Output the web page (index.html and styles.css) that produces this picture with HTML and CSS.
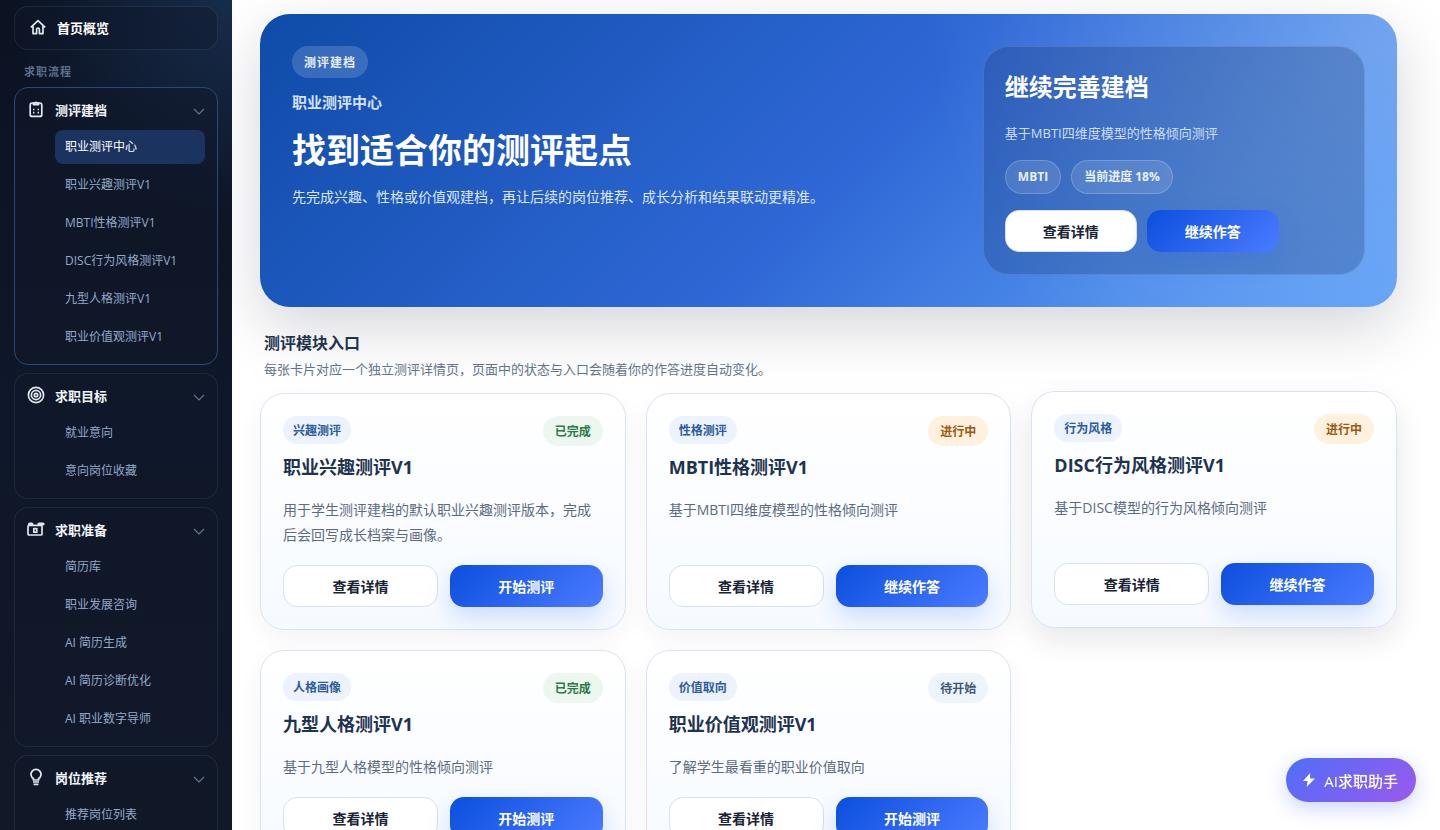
FILE: index.html
```html
<!DOCTYPE html>
<html lang="zh-CN">
<head>
  <meta charset="UTF-8">
  <meta name="viewport" content="width=device-width, initial-scale=1.0">
  <title>职业测评中心</title>
  <link rel="stylesheet" href="styles.css">
</head>
<body>
  <div class="layout">
    <aside class="sidebar">
      <a class="nav-home" href="#">
        <svg class="nav-icon" viewBox="0 0 18 18"><path d="M1.8 9.4 9 2.6l7.2 6.8M4 7.6v8h3.6v-4.2a1.4 1.4 0 0 1 2.8 0v4.2H14v-8"/></svg>
        首页概览
      </a>
      <div class="nav-label">求职流程</div>

      <nav class="nav-groups">
        <section class="nav-group active">
          <button class="nav-title" type="button">
            <svg class="nav-icon" viewBox="0 0 18 18"><rect x="3.2" y="3" width="11.6" height="13.4" rx="2"/><path d="M6.4 4.6V3.2h1.2a1.5 1.5 0 0 1 2.8 0h1.2v1.4z"/><path d="M6 9.5h1.4M10.6 9.5H12M6 12.6h1.4M10.6 12.6H12"/></svg>
            <span>测评建档</span>
            <svg class="chevron" viewBox="0 0 12 12"><path d="m1 6 5 5 5-5"/></svg>
          </button>
          <div class="nav-items">
            <a class="current" href="#">职业测评中心</a>
            <a href="#">职业兴趣测评V1</a>
            <a href="#">MBTI性格测评V1</a>
            <a href="#">DISC行为风格测评V1</a>
            <a href="#">九型人格测评V1</a>
            <a href="#">职业价值观测评V1</a>
          </div>
        </section>

        <section class="nav-group">
          <button class="nav-title" type="button">
            <svg class="nav-icon" viewBox="0 0 18 18"><circle cx="9" cy="9" r="7.6"/><circle cx="9" cy="9" r="4.6"/><circle cx="9" cy="9" r="1.7"/></svg>
            <span>求职目标</span>
            <svg class="chevron" viewBox="0 0 12 12"><path d="m1 6 5 5 5-5"/></svg>
          </button>
          <div class="nav-items">
            <a href="#">就业意向</a>
            <a href="#">意向岗位收藏</a>
          </div>
        </section>

        <section class="nav-group">
          <button class="nav-title" type="button">
            <svg class="nav-icon" viewBox="0 0 18 18"><rect x="1" y="5.400" width="14" height="9.600" rx="1"/><path d="M2.600 4h2.200M12 4h4" stroke-width="3.200" stroke-linecap="round"/><path d="M6.800 8.600h3v3.600h-3z"/></svg>
            <span>求职准备</span>
            <svg class="chevron" viewBox="0 0 12 12"><path d="m1 6 5 5 5-5"/></svg>
          </button>
          <div class="nav-items">
            <a href="#">简历库</a>
            <a href="#">职业发展咨询</a>
            <a href="#">AI 简历生成</a>
            <a href="#">AI 简历诊断优化</a>
            <a href="#">AI 职业数字导师</a>
          </div>
        </section>

        <section class="nav-group">
          <button class="nav-title" type="button">
            <svg class="nav-icon" viewBox="0 0 18 18"><path d="M6.4 12V10.600A5 5 0 1 1 11.6 10.600V12zM6 14h6M6.600 16.400h4.800"/></svg>
            <span>岗位推荐</span>
            <svg class="chevron" viewBox="0 0 12 12"><path d="m1 6 5 5 5-5"/></svg>
          </button>
          <div class="nav-items">
            <a href="#">推荐岗位列表</a>
          </div>
        </section>
      </nav>
    </aside>

    <main class="main">
      <section class="hero">
        <div class="hero-copy">
          <span class="hero-badge">测评建档</span>
          <p class="hero-kicker">职业测评中心</p>
          <h1>找到适合你的测评起点</h1>
          <p class="hero-desc">先完成兴趣、性格或价值观建档，再让后续的岗位推荐、成长分析和结果联动更精准。</p>
        </div>
        <div class="hero-panel">
          <h2>继续完善建档</h2>
          <p>基于MBTI四维度模型的性格倾向测评</p>
          <div class="pills">
            <span class="pill">MBTI</span>
            <span class="pill">当前进度 18%</span>
          </div>
          <div class="hero-actions">
            <button class="btn btn-plain" type="button">查看详情</button>
            <button class="btn btn-primary" type="button">继续作答</button>
          </div>
        </div>
      </section>

      <header class="section-head">
        <h2>测评模块入口</h2>
        <p>每张卡片对应一个独立测评详情页，页面中的状态与入口会随着你的作答进度自动变化。</p>
      </header>

      <div class="cards">
        <article class="card">
          <div class="card-top"><span class="tag">兴趣测评</span><span class="state done">已完成</span></div>
          <h3>职业兴趣测评V1</h3>
          <p>用于学生测评建档的默认职业兴趣测评版本，完成后会回写成长档案与画像。</p>
          <div class="card-actions">
            <button class="btn btn-plain" type="button">查看详情</button>
            <button class="btn btn-primary" type="button">开始测评</button>
          </div>
        </article>

        <article class="card">
          <div class="card-top"><span class="tag">性格测评</span><span class="state doing">进行中</span></div>
          <h3>MBTI性格测评V1</h3>
          <p>基于MBTI四维度模型的性格倾向测评</p>
          <div class="card-actions">
            <button class="btn btn-plain" type="button">查看详情</button>
            <button class="btn btn-primary" type="button">继续作答</button>
          </div>
        </article>

        <article class="card raised">
          <div class="card-top"><span class="tag">行为风格</span><span class="state doing">进行中</span></div>
          <h3>DISC行为风格测评V1</h3>
          <p>基于DISC模型的行为风格倾向测评</p>
          <div class="card-actions">
            <button class="btn btn-plain" type="button">查看详情</button>
            <button class="btn btn-primary" type="button">继续作答</button>
          </div>
        </article>

        <article class="card">
          <div class="card-top"><span class="tag">人格画像</span><span class="state done">已完成</span></div>
          <h3>九型人格测评V1</h3>
          <p>基于九型人格模型的性格倾向测评</p>
          <div class="card-actions">
            <button class="btn btn-plain" type="button">查看详情</button>
            <button class="btn btn-primary" type="button">开始测评</button>
          </div>
        </article>

        <article class="card">
          <div class="card-top"><span class="tag">价值取向</span><span class="state todo">待开始</span></div>
          <h3>职业价值观测评V1</h3>
          <p>了解学生最看重的职业价值取向</p>
          <div class="card-actions">
            <button class="btn btn-plain" type="button">查看详情</button>
            <button class="btn btn-primary" type="button">开始测评</button>
          </div>
        </article>
      </div>
    </main>
  </div>

  <button class="assistant" type="button">
    <svg viewBox="0 0 14 14"><path d="M8.200 0 1 8h4.600L4.600 14 13 5.600H8z"/></svg>
    AI求职助手
  </button>
</body>
</html>
```
FILE: styles.css
```css
* {
  margin: 0;
  padding: 0;
  box-sizing: border-box;
}

body {
  height: 100vh;
  overflow: hidden;
  font-family: "Open Sans", "Noto Sans CJK SC", sans-serif;
  color: #1e293b;
  background: #fff;
}

a {
  text-decoration: none;
}

button {
  font-family: inherit;
  border: none;
  cursor: pointer;
}

.layout {
  display: flex;
  height: 100vh;
}

/* sidebar */
.sidebar {
  flex: 0 0 232px;
  padding: 6px 14px 0;
  overflow: hidden;
  background:
    radial-gradient(circle at 100% 0, rgba(56, 120, 190, 0.26), transparent 220px),
    linear-gradient(180deg, #0b1222 0%, #0f172a 50%, #111827 100%);
}

.nav-icon {
  flex: none;
  width: 18px;
  height: 18px;
  fill: none;
  stroke: #e2e8f0;
  stroke-width: 1.7;
  stroke-linejoin: round;
}

.nav-home {
  display: flex;
  align-items: center;
  gap: 10px;
  height: 44px;
  padding: 0 14px 2px;
  border: 1px solid rgba(148, 163, 184, 0.13);
  border-radius: 14px;
  background: rgba(15, 23, 42, 0.4);
  color: #fff;
  font-size: 13px;
  font-weight: 700;
}

.nav-label {
  padding: 12px 10px 6px;
  color: #5d6f8c;
  font-size: 11px;
  font-weight: 600;
  line-height: 19px;
  letter-spacing: 1px;
}

.nav-groups {
  display: flex;
  flex-direction: column;
  gap: 8px;
}

.nav-group {
  padding-bottom: 10px;
  border: 1px solid rgba(148, 163, 184, 0.13);
  border-radius: 14px;
  background: rgba(15, 23, 42, 0.5);
}

.nav-group.active {
  border-color: #264a7c;
}

.nav-title {
  display: flex;
  align-items: center;
  gap: 10px;
  width: 100%;
  height: 42px;
  padding: 0 12px;
  background: none;
  color: #f1f5f9;
  font-size: 13px;
  font-weight: 700;
  text-align: left;
}

.nav-title span {
  flex: 1;
}

.chevron {
  width: 12px;
  height: 12px;
  fill: none;
  stroke: #64748b;
  stroke-width: 1.2;
}

.nav-items {
  display: flex;
  flex-direction: column;
  gap: 4px;
  padding: 0 12px 0 40px;
}

.nav-items a {
  padding: 0 10px;
  border-radius: 8px;
  color: #94a9c9;
  font-size: 12px;
  line-height: 34px;
}

.nav-items .current {
  background: #1a335f;
  color: #fff;
}

/* main */
.main {
  flex: 1;
  min-width: 0;
  padding: 14px 43px 0 28px;
  overflow: hidden;
}

.hero {
  display: grid;
  grid-template-columns: 1.75fr 1fr;
  gap: 22px;
  padding: 32px;
  border-radius: 30px;
  background:
    radial-gradient(circle at 100% 0, rgba(255, 255, 255, 0.2), transparent 40%),
    linear-gradient(135deg, #0f4ba8 0%, #2f68d6 52%, #4f8eec 80%, #5c9ef7 100%);
  box-shadow: 0 20px 60px rgba(15, 23, 42, 0.18);
  color: #fff;
}

.hero-badge {
  display: inline-block;
  padding: 1px 12px 0;
  border-radius: 16px;
  background: rgba(255, 255, 255, 0.16);
  color: #e6eefc;
  font-size: 12px;
  font-weight: 700;
  line-height: 31px;
  letter-spacing: 1px;
}

.hero-kicker {
  margin-top: 12px;
  color: #d3e0f6;
  font-size: 15px;
  font-weight: 600;
  line-height: 24px;
}

.hero h1 {
  margin-top: 14px;
  font-size: 34px;
  font-weight: 700;
  line-height: 44px;
}

.hero-desc {
  margin-top: 12px;
  color: #dce7fa;
  font-size: 14px;
  line-height: 26px;
}

.hero-panel {
  padding: 22px 21px;
  border: 1px solid rgba(255, 255, 255, 0.13);
  border-radius: 26px;
  background: rgba(15, 42, 90, 0.24);
}

.hero-panel h2 {
  font-size: 24px;
  line-height: 36px;
}

.hero-panel p {
  margin-top: 16px;
  color: #cfdef5;
  font-size: 13px;
  line-height: 24px;
}

.pills {
  display: flex;
  gap: 10px;
  margin: 15px 0 16px;
}

.pill {
  padding: 0 12px;
  border: 1px solid rgba(255, 255, 255, 0.2);
  border-radius: 17px;
  background: rgba(255, 255, 255, 0.12);
  color: #e9f1fd;
  font-size: 12px;
  font-weight: 700;
  line-height: 32px;
}

.hero-actions {
  display: flex;
  gap: 10px;
}

.hero-actions .btn {
  min-width: 132px;
}

.btn {
  height: 42px;
  padding: 0 16px;
  border-radius: 14px;
  font-size: 14px;
  font-weight: 600;
}

.btn-plain {
  border: 1px solid #d8e1ee;
  background: #fff;
  color: #1b2434;
}

.btn-primary {
  background: linear-gradient(135deg, #0b4fde 0%, #4b7bff 100%);
  box-shadow: 0 10px 24px rgba(37, 99, 235, 0.2);
  color: #fff;
}

.section-head {
  padding: 24px 4px 12px;
}

.section-head h2 {
  color: #1f3350;
  font-size: 16px;
  font-weight: 600;
  line-height: 24px;
}

.section-head p {
  margin-top: 2px;
  color: #64748b;
  font-size: 13px;
  line-height: 24px;
}

.cards {
  display: grid;
  grid-template-columns: repeat(3, 1fr);
  gap: 20px;
}

.card {
  display: flex;
  flex-direction: column;
  padding: 22px;
  border: 1px solid #d9e4f2;
  border-radius: 24px;
  background: linear-gradient(180deg, #fff 0%, #f6faff 100%);
  box-shadow: 0 8px 24px rgba(15, 23, 42, 0.05);
}

.card.raised {
  transform: translateY(-2px);
  box-shadow: 0 12px 30px rgba(15, 23, 42, 0.1);
}

.card-top {
  display: flex;
  align-items: flex-start;
  justify-content: space-between;
}

.tag,
.state {
  border-radius: 15px;
  font-size: 12px;
  font-weight: 600;
}

.tag {
  padding: 1px 10px 0;
  background: #ecf3ff;
  color: #2d5c9c;
  line-height: 27px;
}

.state {
  padding: 1px 12px 0;
  line-height: 29px;
}

.done {
  background: #edf7f0;
  color: #2a7a4a;
}

.doing {
  background: #fff1dd;
  color: #9a5a10;
}

.todo {
  background: #edf4fc;
  color: #3c5878;
}

.card h3 {
  margin-top: 8px;
  color: #1f3350;
  font-size: 18px;
  font-weight: 700;
  line-height: 27px;
}

.card p {
  margin: 16px 0 18px;
  color: #5d6b82;
  font-size: 14px;
  line-height: 25px;
}

.card-actions {
  display: flex;
  gap: 12px;
  margin-top: auto;
}

.card-actions .btn {
  flex: 1;
}

/* floating button */
.assistant {
  position: fixed;
  right: 24px;
  bottom: 28px;
  display: flex;
  align-items: center;
  gap: 8px;
  height: 44px;
  padding: 0 18px 0 16px;
  border-radius: 22px;
  background: linear-gradient(135deg, #4f6ef7 0%, #9b59ee 100%);
  box-shadow: 0 6px 20px rgba(79, 110, 247, 0.3);
  color: #fff;
  font-size: 15px;
  font-weight: 500;
}

.assistant svg {
  width: 14px;
  height: 14px;
  fill: #fff;
}
```
